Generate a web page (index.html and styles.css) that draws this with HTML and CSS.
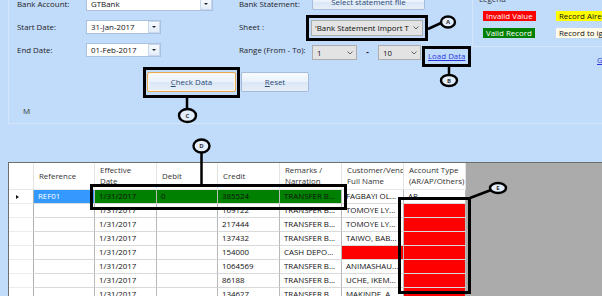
FILE: index.html
```html
<!DOCTYPE html>
<html>
<head>
<meta charset="utf-8">
<link rel="stylesheet" href="styles.css">
</head>
<body>
<div class="app">
  <section class="panel">
    <div class="form-row">
      <div class="fields">
        <span class="lbl">Bank Account:</span>
        <div class="combo combo-white w-bank"><span class="val">GTBank</span><span class="drop"><i class="tri"></i></span></div>
        <span class="lbl">Bank Statement:</span>
        <button class="btn btn-file">Select statement file</button>

        <span class="lbl">Start Date:</span>
        <div class="combo combo-white w-date"><span class="val">31-Jan-2017</span><span class="drop"><i class="tri"></i></span></div>
        <span class="lbl">Sheet :</span>
        <div class="combo combo-grey w-sheet"><span class="val">'Bank Statement Import T</span><svg class="chev" width="6" height="4" viewBox="0 0 6 4"><polyline points="0.5,0.5 3,3 5.5,0.5" fill="none" stroke="#555" stroke-width="0.9"/></svg></div>

        <span class="lbl">End Date:</span>
        <div class="combo combo-white w-date"><span class="val">01-Feb-2017</span><span class="drop"><i class="tri"></i></span></div>
        <span class="lbl">Range (From - To):</span>
        <div class="range">
          <div class="combo combo-grey w-from"><span class="val">1</span><svg class="chev" width="6" height="4" viewBox="0 0 6 4"><polyline points="0.5,0.5 3,3 5.5,0.5" fill="none" stroke="#555" stroke-width="0.9"/></svg></div>
          <span class="dash">-</span>
          <div class="combo combo-grey w-to"><span class="val">10</span><svg class="chev" width="6" height="4" viewBox="0 0 6 4"><polyline points="0.5,0.5 3,3 5.5,0.5" fill="none" stroke="#555" stroke-width="0.9"/></svg></div>
          <a class="link link-load">Load Data</a>
        </div>
      </div>
      <div class="legend-col">
        <div class="legend">
          <div class="legend-title">Legend</div>
          <div class="legend-grid">
            <span class="tag tag-invalid">Invalid Value</span>
            <span class="tag tag-exists">Record Already Exists</span>
            <span class="tag tag-valid">Valid Record</span>
            <span class="tag tag-ignore">Record to ignore</span>
          </div>
        </div>
        <a class="link link-g">Get Template</a>
      </div>
    </div>
    <div class="actions">
      <button class="btn btn-check"><u>C</u>heck Data</button>
      <button class="btn btn-reset"><u>R</u>eset</button>
    </div>
    <div class="m">M</div>
  </section>

  <section class="datagrid">
    <div class="table">
      <div class="hc hc-corner"></div>
      <div class="hc"><span>Reference</span></div>
      <div class="hc"><span>Effective<br>Date</span></div>
      <div class="hc"><span>Debit</span></div>
      <div class="hc"><span>Credit</span></div>
      <div class="hc"><span>Remarks /<br>Narration</span></div>
      <div class="hc"><span>Customer/Vendor<br>Full Name</span></div>
      <div class="hc"><span>Account Type<br>(AR/AP/Others)</span></div>

      <div class="rh"><i class="cur"></i></div>
      <div class="c sel">REF01</div>
      <div class="c ok">1/31/2017</div>
      <div class="c ok">0</div>
      <div class="c ok">385524</div>
      <div class="c ok">TRANSFER B...</div>
      <div class="c">FAGBAYI OL...</div>
      <div class="c">AR</div>

      <div class="rh"></div>
      <div class="c"></div>
      <div class="c">1/31/2017</div>
      <div class="c"></div>
      <div class="c">169122</div>
      <div class="c">TRANSFER B...</div>
      <div class="c">TOMOYE LY...</div>
      <div class="c bad"></div>

      <div class="rh"></div>
      <div class="c"></div>
      <div class="c">1/31/2017</div>
      <div class="c"></div>
      <div class="c">217444</div>
      <div class="c">TRANSFER B...</div>
      <div class="c">TOMOYE LY...</div>
      <div class="c bad"></div>

      <div class="rh"></div>
      <div class="c"></div>
      <div class="c">1/31/2017</div>
      <div class="c"></div>
      <div class="c">137432</div>
      <div class="c">TRANSFER B...</div>
      <div class="c">TAIWO, BAB...</div>
      <div class="c bad"></div>

      <div class="rh"></div>
      <div class="c"></div>
      <div class="c">1/31/2017</div>
      <div class="c"></div>
      <div class="c">154000</div>
      <div class="c">CASH DEPO...</div>
      <div class="c bad"></div>
      <div class="c bad"></div>

      <div class="rh"></div>
      <div class="c"></div>
      <div class="c">1/31/2017</div>
      <div class="c"></div>
      <div class="c">1064569</div>
      <div class="c">TRANSFER B...</div>
      <div class="c">ANIMASHAU...</div>
      <div class="c bad"></div>

      <div class="rh"></div>
      <div class="c"></div>
      <div class="c">1/31/2017</div>
      <div class="c"></div>
      <div class="c">86188</div>
      <div class="c">TRANSFER B...</div>
      <div class="c">UCHE, IKEM...</div>
      <div class="c bad"></div>

      <div class="rh"></div>
      <div class="c"></div>
      <div class="c">1/31/2017</div>
      <div class="c"></div>
      <div class="c">134627</div>
      <div class="c">TRANSFER B...</div>
      <div class="c">MAKINDE, A...</div>
      <div class="c bad"></div>
    </div>
    <div class="empty"></div>
  </section>

  <svg class="callouts" width="602" height="296" viewBox="0 0 602 296">
    <g fill="none" stroke="#000" stroke-width="3">
      <rect x="307.5" y="16.5" width="119" height="23"/>
      <rect x="423.5" y="47.5" width="46" height="18"/>
      <rect x="144.5" y="68.5" width="94" height="28"/>
      <rect x="91.5" y="185.5" width="254" height="23"/>
      <rect x="399.5" y="198.5" width="70" height="94"/>
    </g>
    <g stroke="#000" stroke-width="2.5">
      <line x1="428" y1="29" x2="441" y2="23"/>
      <line x1="449" y1="67" x2="449" y2="75"/>
      <line x1="187" y1="98" x2="187" y2="109"/>
      <line x1="201.5" y1="152" x2="201.5" y2="185"/>
      <line x1="470" y1="198" x2="491" y2="190"/>
    </g>
    <g fill="#e4eefc" stroke="#000" stroke-width="2.4">
      <ellipse cx="448" cy="22" rx="7" ry="5.5"/>
      <ellipse cx="449" cy="80.5" rx="8" ry="5.5"/>
      <ellipse cx="187.5" cy="115.5" rx="8.5" ry="6.5"/>
      <ellipse cx="201.5" cy="146" rx="8" ry="6.5"/>
      <ellipse cx="498" cy="188" rx="8" ry="5"/>
    </g>
    <g class="callout-text" fill="#333" text-anchor="middle">
      <text x="448" y="24.3">A</text>
      <text x="449" y="82.8">B</text>
      <text x="187.5" y="117.8">C</text>
      <text x="201.5" y="148.3">D</text>
      <text x="498" y="190.3">E</text>
    </g>
  </svg>
</div>
</body>
</html>
```
FILE: styles.css
```css
* { box-sizing: border-box; margin: 0; padding: 0; }
html, body { width: 602px; height: 296px; overflow: hidden; }
body {
  background: #c1dbfb;
  font-family: "Open Sans", "Noto Sans", sans-serif;
  font-size: 7.9px;
  color: #222;
}
.app { position: relative; width: 602px; height: 296px; overflow: hidden; }

/* group box */
.panel {
  display: flow-root;
  margin-left: 8px;
  height: 124px;
  border-left: 1px solid #d6e6fa;
  border-bottom: 1px solid #d6e6fa;
  padding-left: 8px;
}
.form-row { display: flex; align-items: flex-start; height: 60px; margin-top: -3px; }
.fields {
  display: grid;
  grid-template-columns: 69px 153px 72px 160px;
  grid-template-rows: 14px 14px 14px;
  row-gap: 9px;
  align-items: center;
}
.lbl { line-height: 14px; white-space: nowrap; color: #1e1e1e; }

.combo {
  display: flex;
  align-items: center;
  position: relative;
  white-space: nowrap;
  overflow: hidden;
}
.combo .val { flex: 1; padding-left: 4px; line-height: 12px; color: #111; overflow: hidden; }
.combo-white { height: 14px; background: #fff; border: 1px solid #abc2de; }
.combo-white .drop {
  width: 12px; height: 12px;
  display: flex; align-items: center; justify-content: center;
  background: linear-gradient(#f7faff, #e2ecf8);
  border: 1px solid #c8d8ec;
}
.tri { display: block; width: 0; height: 0; border-left: 2px solid transparent; border-right: 2px solid transparent; border-top: 2.5px solid #222; }
.w-bank { width: 127px; }
.w-date { width: 75px; }

.combo-grey { background: #e3e3e3; border: 1px solid #adadad; padding-right: 3px; }
.chev { flex: none; display: block; }
.w-sheet { width: 112px; height: 16px; align-self: start; }
.w-sheet .val { padding-left: 3px; }

.btn {
  font-family: inherit;
  font-size: 7.9px;
  color: #2b4a76;
  background: linear-gradient(#f8fbff 0%, #e9f1fb 50%, #dbe7f6 51%, #e6eef9 100%);
  border: 1px solid #a6bcd9;
  border-radius: 2px;
  height: 20px;
}
.btn u { text-decoration: underline; }
.btn-file { width: 113px; height: 16px; margin-left: 1px; align-self: start; margin-top: -3px; }

.range { display: flex; align-items: flex-start; height: 14px; }
.range .combo-grey { height: 15px; margin-top: 2px; }
.w-from { width: 45px; margin-left: 1px; }
.w-to { width: 43px; }
.dash { width: 21px; text-align: center; font-weight: bold; line-height: 14px; margin-top: 2px; color: #222; }
.link { color: #2a35e0; text-decoration: underline; white-space: nowrap; cursor: pointer; }
.link-load { margin-left: 7px; margin-top: 8px; line-height: 10px; }

/* legend */
.legend-col { flex: 1; margin-left: 1px; }
.legend {
  border-left: 1px solid #d6e6fa;
  border-bottom: 1px solid #d6e6fa;
  margin-top: -3px;
  padding-bottom: 8px;
}
.legend-title { line-height: 10px; padding-left: 6px; color: #333; }
.legend-grid {
  display: grid;
  grid-template-columns: 73px auto;
  row-gap: 7px;
  margin-top: 7px;
  padding-left: 10px;
}
.tag { justify-self: start; height: 10px; line-height: 10px; padding: 0 3px; white-space: nowrap; }
.tag-invalid { background: #ff0000; color: #fff; }
.tag-valid { background: #008000; color: #fff; }
.tag-exists { background: #ffff00; color: #111; }
.tag-ignore { background: #fffbe8; color: #111; }
.link-g { display: block; margin-top: 8px; padding-left: 125px; line-height: 10px; }

/* buttons */
.actions { display: flex; gap: 5px; margin-top: 15px; margin-left: 130px; }
.btn-check { width: 89px; border: 1px solid #e9a752; box-shadow: inset 0 0 0 1px #fff6e6; }
.btn-reset { width: 68px; }
.m { margin-top: 14px; padding-left: 6px; line-height: 10px; color: #333; }

/* data grid */
.datagrid {
  display: flex;
  margin-top: 38px;
  margin-left: 8px;
  height: 134px;
  border-top: 1px solid #6e6e6e;
  border-left: 1px solid #6e6e6e;
}
.table {
  display: grid;
  grid-template-columns: 25px 61px 62px 61px 62px 62px 62px 62px;
  grid-template-rows: 27px;
  grid-auto-rows: 14px;
  background: #fff;
  align-content: start;
}
.empty { flex: 1; background: #ababab; }
.hc {
  display: flex;
  align-items: center;
  padding-left: 5px;
  line-height: 11px;
  white-space: nowrap;
  overflow: hidden;
  color: #333;
  border-right: 1px solid #e3e3e3;
  border-bottom: 1px solid #e8e8e8;
}
.rh {
  display: flex;
  align-items: center;
  justify-content: center;
  border-right: 1px solid #b0b0b0;
  border-bottom: 1px solid #ececec;
}
.cur { display: block; width: 0; height: 0; border-top: 2.5px solid transparent; border-bottom: 2.5px solid transparent; border-left: 3px solid #111; margin-left: -8px; }
.c {
  padding-left: 4px;
  line-height: 13px;
  white-space: nowrap;
  overflow: hidden;
  color: #111;
  border-right: 1px solid #b9b9b9;
  border-bottom: 1px solid #d9d9d9;
}
.c.sel { background: #3399ff; color: #fff; }
.c.ok { background: #008000; color: #111; }
.c.bad { background: #ff0000; }

/* annotations */
.callouts { position: absolute; left: 0; top: 0; pointer-events: none; }
.callout-text { font-family: "Open Sans", sans-serif; font-size: 6px; font-weight: bold; }
```
